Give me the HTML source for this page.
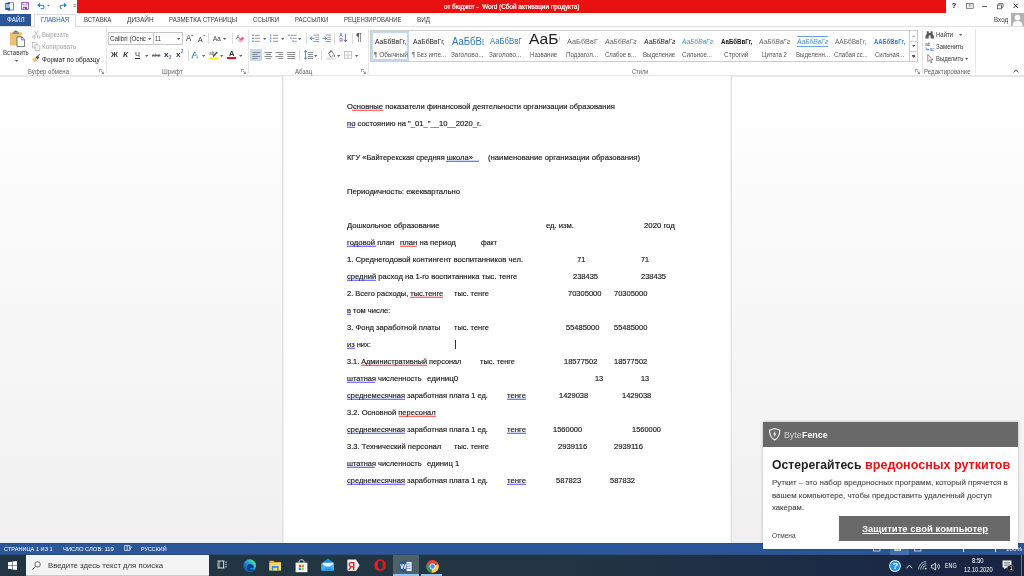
<!DOCTYPE html>
<html lang="ru"><head><meta charset="utf-8"><title>от бюджет - Word</title>
<style>
html,body{margin:0;padding:0;}
body{width:1024px;height:576px;overflow:hidden;position:relative;background:#fbfbfb;font-family:"Liberation Sans",sans-serif;}
#root{position:absolute;left:0;top:0;width:1024px;height:576px;overflow:hidden;will-change:transform;}
#root div,#root span,#root svg{position:absolute;}
#root span{white-space:pre;transform-origin:0 50%;line-height:12px;height:12px;}
</style></head><body><div id="root">
<div style="left:0px;top:0px;width:1024px;height:13.2px;background:#ffffff;"></div>
<div style="left:77px;top:0px;width:869px;height:13px;background:#e81010;"></div>
<div style="left:0px;top:13px;width:1024px;height:63px;background:#ffffff;"></div>
<div style="left:0px;top:26.3px;width:1024px;height:0.9px;background:#e0e0e0;"></div>
<div style="left:0px;top:75.3px;width:1024px;height:1.4px;background:#e8e8e8;"></div>
<div style="left:0px;top:13.6px;width:31.2px;height:12.9px;background:#2b579a;"></div>
<div style="left:33.8px;top:13.6px;width:42.3px;height:13.6px;background:#ffffff;border:0.9px solid #dedede;border-bottom:none;box-sizing:border-box;"></div>
<div style="left:0px;top:76.5px;width:1024px;height:466.5px;background:linear-gradient(#ffffff 0%,#f0f0f0 100%);"></div>
<div style="left:282px;top:76.2px;width:450px;height:467px;background:#ffffff;border-left:1px solid #e2e2e2;border-right:1px solid #e2e2e2;box-sizing:border-box;"></div>
<div style="left:283px;top:76.2px;width:1px;height:467px;background:#f1f1f1;"></div>
<div style="left:730px;top:76.2px;width:1px;height:467px;background:#f1f1f1;"></div>
<div style="left:0px;top:543px;width:1024px;height:12px;background:#2b579a;"></div>
<div style="left:0px;top:543px;width:1024px;height:1px;background:#24509a;"></div>
<div style="left:0px;top:554px;width:1024px;height:1px;background:#284c7f;"></div>
<div style="left:0px;top:555px;width:1024px;height:21px;background:linear-gradient(90deg,#213642 0%,#213642 52%,#1f3044 68%,#1b2945 86%,#192342 100%);"></div>
<div style="left:25.6px;top:555px;width:183.2px;height:21px;background:#f3f3f3;"></div>
<span style="left:443.50px;top:0.60px;font-size:6.3px;color:#ffffff;transform:scaleX(1.0147);-webkit-text-stroke:0.2px #fff;">от бюджет -  Word (Сбой активации продукта)</span>
<span style="left:7.00px;top:14.40px;font-size:7px;color:#ffffff;transform:scaleX(0.9040);">ФАЙЛ</span>
<span style="left:40.80px;top:14.40px;font-size:7px;color:#2b579a;transform:scaleX(0.8782);">ГЛАВНАЯ</span>
<span style="left:84.20px;top:14.40px;font-size:7px;color:#383838;transform:scaleX(0.8697);">ВСТАВКА</span>
<span style="left:126.90px;top:14.40px;font-size:7px;color:#383838;transform:scaleX(0.9247);">ДИЗАЙН</span>
<span style="left:169.10px;top:14.40px;font-size:7px;color:#383838;transform:scaleX(0.8752);">РАЗМЕТКА СТРАНИЦЫ</span>
<span style="left:252.80px;top:14.40px;font-size:7px;color:#383838;transform:scaleX(0.8662);">ССЫЛКИ</span>
<span style="left:294.80px;top:14.40px;font-size:7px;color:#383838;transform:scaleX(0.8571);">РАССЫЛКИ</span>
<span style="left:343.80px;top:14.40px;font-size:7px;color:#383838;transform:scaleX(0.8540);">РЕЦЕНЗИРОВАНИЕ</span>
<span style="left:417.10px;top:14.40px;font-size:7px;color:#383838;transform:scaleX(0.8925);">ВИД</span>
<span style="left:993.70px;top:13.90px;font-size:7px;color:#383838;transform:scaleX(0.8899);">Вход</span>
<span style="left:347.00px;top:100.90px;font-size:7.2px;color:#1a1a1a;transform:scaleX(1.0569);-webkit-text-stroke:0.16px #1a1a1a;">Основные показатели финансовой деятельности организации образования</span>
<svg style="left:351.5px;top:109.25px;overflow:visible" width="31.0" height="2.5"><polyline points="0.0,1.0 1.0,1.5 2.0,1.0 3.0,1.5 4.0,1.0 5.0,1.5 6.0,1.0 7.0,1.5 8.0,1.0 9.0,1.5 10.0,1.0 11.0,1.5 12.0,1.0 13.0,1.5 14.0,1.0 15.0,1.5 16.0,1.0 17.0,1.5 18.0,1.0 19.0,1.5 20.0,1.0 21.0,1.5 22.0,1.0 23.0,1.5 24.0,1.0 25.0,1.5 26.0,1.0 27.0,1.5 28.0,1.0 29.0,1.5 30.0,1.0 31.0,1.5" fill="none" stroke="#ff1a1a" stroke-width="0.85"/></svg>
<span style="left:347.00px;top:117.90px;font-size:7.2px;color:#1a1a1a;transform:scaleX(1.0602);-webkit-text-stroke:0.16px #1a1a1a;">по состоянию на &quot;_01_&quot;__10__2020_г.</span>
<svg style="left:347px;top:126.25px;overflow:visible" width="8.0" height="2.5"><polyline points="0.0,1.0 1.0,1.5 2.0,1.0 3.0,1.5 4.0,1.0 5.0,1.5 6.0,1.0 7.0,1.5 8.0,1.0" fill="none" stroke="#2a2aff" stroke-width="0.85"/></svg>
<span style="left:347.00px;top:151.90px;font-size:7.2px;color:#1a1a1a;transform:scaleX(1.0398);-webkit-text-stroke:0.16px #1a1a1a;">КГУ «Байтерекская средняя школа»</span>
<svg style="left:446px;top:160.25px;overflow:visible" width="33.0" height="2.5"><polyline points="0.0,1.0 1.0,1.5 2.0,1.0 3.0,1.5 4.0,1.0 5.0,1.5 6.0,1.0 7.0,1.5 8.0,1.0 9.0,1.5 10.0,1.0 11.0,1.5 12.0,1.0 13.0,1.5 14.0,1.0 15.0,1.5 16.0,1.0 17.0,1.5 18.0,1.0 19.0,1.5 20.0,1.0 21.0,1.5 22.0,1.0 23.0,1.5 24.0,1.0 25.0,1.5 26.0,1.0 27.0,1.5 28.0,1.0 29.0,1.5 30.0,1.0 31.0,1.5 32.0,1.0 33.0,1.5" fill="none" stroke="#2a2aff" stroke-width="0.85"/></svg>
<span style="left:487.90px;top:151.90px;font-size:7.2px;color:#1a1a1a;transform:scaleX(1.0702);-webkit-text-stroke:0.16px #1a1a1a;">(наименование организации образования)</span>
<span style="left:347.00px;top:185.90px;font-size:7.2px;color:#1a1a1a;transform:scaleX(1.0648);-webkit-text-stroke:0.16px #1a1a1a;">Периодичность: ежеквартально</span>
<span style="left:347.00px;top:219.90px;font-size:7.2px;color:#1a1a1a;transform:scaleX(1.0688);-webkit-text-stroke:0.16px #1a1a1a;">Дошкольное образование</span>
<span style="left:546.00px;top:219.90px;font-size:7.2px;color:#1a1a1a;transform:scaleX(1.0654);-webkit-text-stroke:0.16px #1a1a1a;">ед. изм.</span>
<span style="left:643.90px;top:219.90px;font-size:7.2px;color:#1a1a1a;transform:scaleX(1.0813);-webkit-text-stroke:0.16px #1a1a1a;">2020 год</span>
<span style="left:347.00px;top:236.90px;font-size:7.2px;color:#1a1a1a;transform:scaleX(1.0678);-webkit-text-stroke:0.16px #1a1a1a;">годовой план</span>
<svg style="left:347px;top:245.25px;overflow:visible" width="29.0" height="2.5"><polyline points="0.0,1.0 1.0,1.5 2.0,1.0 3.0,1.5 4.0,1.0 5.0,1.5 6.0,1.0 7.0,1.5 8.0,1.0 9.0,1.5 10.0,1.0 11.0,1.5 12.0,1.0 13.0,1.5 14.0,1.0 15.0,1.5 16.0,1.0 17.0,1.5 18.0,1.0 19.0,1.5 20.0,1.0 21.0,1.5 22.0,1.0 23.0,1.5 24.0,1.0 25.0,1.5 26.0,1.0 27.0,1.5 28.0,1.0 29.0,1.5" fill="none" stroke="#2a2aff" stroke-width="0.85"/></svg>
<span style="left:400.00px;top:236.90px;font-size:7.2px;color:#1a1a1a;transform:scaleX(1.0740);-webkit-text-stroke:0.16px #1a1a1a;">план на период</span>
<svg style="left:400px;top:245.25px;overflow:visible" width="17.0" height="2.5"><polyline points="0.0,1.0 1.0,1.5 2.0,1.0 3.0,1.5 4.0,1.0 5.0,1.5 6.0,1.0 7.0,1.5 8.0,1.0 9.0,1.5 10.0,1.0 11.0,1.5 12.0,1.0 13.0,1.5 14.0,1.0 15.0,1.5 16.0,1.0 17.0,1.5" fill="none" stroke="#ff1a1a" stroke-width="0.85"/></svg>
<span style="left:480.60px;top:236.90px;font-size:7.2px;color:#1a1a1a;transform:scaleX(0.9612);-webkit-text-stroke:0.16px #1a1a1a;">факт</span>
<span style="left:347.00px;top:253.90px;font-size:7.2px;color:#1a1a1a;transform:scaleX(1.0695);-webkit-text-stroke:0.16px #1a1a1a;">1. Среднегодовой контингент воспитанников чел.</span>
<span style="left:577.30px;top:253.90px;font-size:7.2px;color:#1a1a1a;transform:scaleX(1.0000);-webkit-text-stroke:0.16px #1a1a1a;">71</span>
<span style="left:641.00px;top:253.90px;font-size:7.2px;color:#1a1a1a;transform:scaleX(1.0000);-webkit-text-stroke:0.16px #1a1a1a;">71</span>
<span style="left:347.00px;top:270.90px;font-size:7.2px;color:#1a1a1a;transform:scaleX(1.0581);-webkit-text-stroke:0.16px #1a1a1a;">средний расход на 1-го воспитанника тыс. тенге</span>
<svg style="left:347px;top:279.25px;overflow:visible" width="29.5" height="2.5"><polyline points="0.0,1.0 1.0,1.5 2.0,1.0 3.0,1.5 4.0,1.0 5.0,1.5 6.0,1.0 7.0,1.5 8.0,1.0 9.0,1.5 10.0,1.0 11.0,1.5 12.0,1.0 13.0,1.5 14.0,1.0 15.0,1.5 16.0,1.0 17.0,1.5 18.0,1.0 19.0,1.5 20.0,1.0 21.0,1.5 22.0,1.0 23.0,1.5 24.0,1.0 25.0,1.5 26.0,1.0 27.0,1.5 28.0,1.0 29.0,1.5" fill="none" stroke="#2a2aff" stroke-width="0.85"/></svg>
<span style="left:573.40px;top:270.90px;font-size:7.2px;color:#1a1a1a;transform:scaleX(1.0423);-webkit-text-stroke:0.16px #1a1a1a;">238435</span>
<span style="left:641.00px;top:270.90px;font-size:7.2px;color:#1a1a1a;transform:scaleX(1.0423);-webkit-text-stroke:0.16px #1a1a1a;">238435</span>
<span style="left:347.00px;top:287.90px;font-size:7.2px;color:#1a1a1a;transform:scaleX(1.0352);-webkit-text-stroke:0.16px #1a1a1a;">2. Всего расходы, тыс.тенге</span>
<svg style="left:410px;top:296.25px;overflow:visible" width="33.1" height="2.5"><polyline points="0.0,1.0 1.0,1.5 2.0,1.0 3.0,1.5 4.0,1.0 5.0,1.5 6.0,1.0 7.0,1.5 8.0,1.0 9.0,1.5 10.0,1.0 11.0,1.5 12.0,1.0 13.0,1.5 14.0,1.0 15.0,1.5 16.0,1.0 17.0,1.5 18.0,1.0 19.0,1.5 20.0,1.0 21.0,1.5 22.0,1.0 23.0,1.5 24.0,1.0 25.0,1.5 26.0,1.0 27.0,1.5 28.0,1.0 29.0,1.5 30.0,1.0 31.0,1.5 32.0,1.0 33.0,1.5" fill="none" stroke="#ff1a1a" stroke-width="0.85"/></svg>
<span style="left:453.90px;top:287.90px;font-size:7.2px;color:#1a1a1a;transform:scaleX(1.0360);-webkit-text-stroke:0.16px #1a1a1a;">тыс. тенге</span>
<span style="left:567.50px;top:287.90px;font-size:7.2px;color:#1a1a1a;transform:scaleX(1.0474);-webkit-text-stroke:0.16px #1a1a1a;">70305000</span>
<span style="left:614.40px;top:287.90px;font-size:7.2px;color:#1a1a1a;transform:scaleX(1.0443);-webkit-text-stroke:0.16px #1a1a1a;">70305000</span>
<span style="left:347.00px;top:304.90px;font-size:7.2px;color:#1a1a1a;transform:scaleX(1.0454);-webkit-text-stroke:0.16px #1a1a1a;">в том числе:</span>
<svg style="left:347px;top:313.25px;overflow:visible" width="4.0" height="2.5"><polyline points="0.0,1.0 1.0,1.5 2.0,1.0 3.0,1.5 4.0,1.0" fill="none" stroke="#2a2aff" stroke-width="0.85"/></svg>
<span style="left:347.00px;top:321.90px;font-size:7.2px;color:#1a1a1a;transform:scaleX(1.0529);-webkit-text-stroke:0.16px #1a1a1a;">3. Фонд заработной платы</span>
<span style="left:453.90px;top:321.90px;font-size:7.2px;color:#1a1a1a;transform:scaleX(1.0360);-webkit-text-stroke:0.16px #1a1a1a;">тыс. тенге</span>
<span style="left:565.50px;top:321.90px;font-size:7.2px;color:#1a1a1a;transform:scaleX(1.0411);-webkit-text-stroke:0.16px #1a1a1a;">55485000</span>
<span style="left:614.40px;top:321.90px;font-size:7.2px;color:#1a1a1a;transform:scaleX(1.0443);-webkit-text-stroke:0.16px #1a1a1a;">55485000</span>
<span style="left:347.00px;top:338.90px;font-size:7.2px;color:#1a1a1a;transform:scaleX(1.0441);-webkit-text-stroke:0.16px #1a1a1a;">из них:</span>
<svg style="left:347px;top:347.25px;overflow:visible" width="8.0" height="2.5"><polyline points="0.0,1.0 1.0,1.5 2.0,1.0 3.0,1.5 4.0,1.0 5.0,1.5 6.0,1.0 7.0,1.5 8.0,1.0" fill="none" stroke="#2a2aff" stroke-width="0.85"/></svg>
<div style="left:455px;top:339.8px;width:0.8px;height:9px;background:#333;"></div>
<span style="left:347.00px;top:355.90px;font-size:7.2px;color:#1a1a1a;transform:scaleX(1.0147);-webkit-text-stroke:0.16px #1a1a1a;">3.1. Административный персонал</span>
<svg style="left:361px;top:364.25px;overflow:visible" width="66.0" height="2.5"><polyline points="0.0,1.0 1.0,1.5 2.0,1.0 3.0,1.5 4.0,1.0 5.0,1.5 6.0,1.0 7.0,1.5 8.0,1.0 9.0,1.5 10.0,1.0 11.0,1.5 12.0,1.0 13.0,1.5 14.0,1.0 15.0,1.5 16.0,1.0 17.0,1.5 18.0,1.0 19.0,1.5 20.0,1.0 21.0,1.5 22.0,1.0 23.0,1.5 24.0,1.0 25.0,1.5 26.0,1.0 27.0,1.5 28.0,1.0 29.0,1.5 30.0,1.0 31.0,1.5 32.0,1.0 33.0,1.5 34.0,1.0 35.0,1.5 36.0,1.0 37.0,1.5 38.0,1.0 39.0,1.5 40.0,1.0 41.0,1.5 42.0,1.0 43.0,1.5 44.0,1.0 45.0,1.5 46.0,1.0 47.0,1.5 48.0,1.0 49.0,1.5 50.0,1.0 51.0,1.5 52.0,1.0 53.0,1.5 54.0,1.0 55.0,1.5 56.0,1.0 57.0,1.5 58.0,1.0 59.0,1.5 60.0,1.0 61.0,1.5 62.0,1.0 63.0,1.5 64.0,1.0 65.0,1.5 66.0,1.0" fill="none" stroke="#ff1a1a" stroke-width="0.85"/></svg>
<span style="left:480.20px;top:355.90px;font-size:7.2px;color:#1a1a1a;transform:scaleX(1.0390);-webkit-text-stroke:0.16px #1a1a1a;">тыс. тенге</span>
<span style="left:564.20px;top:355.90px;font-size:7.2px;color:#1a1a1a;transform:scaleX(1.0443);-webkit-text-stroke:0.16px #1a1a1a;">18577502</span>
<span style="left:614.40px;top:355.90px;font-size:7.2px;color:#1a1a1a;transform:scaleX(1.0380);-webkit-text-stroke:0.16px #1a1a1a;">18577502</span>
<span style="left:347.00px;top:372.90px;font-size:7.2px;color:#1a1a1a;transform:scaleX(1.0350);-webkit-text-stroke:0.16px #1a1a1a;">штатная численность</span>
<svg style="left:347px;top:381.25px;overflow:visible" width="28.5" height="2.5"><polyline points="0.0,1.0 1.0,1.5 2.0,1.0 3.0,1.5 4.0,1.0 5.0,1.5 6.0,1.0 7.0,1.5 8.0,1.0 9.0,1.5 10.0,1.0 11.0,1.5 12.0,1.0 13.0,1.5 14.0,1.0 15.0,1.5 16.0,1.0 17.0,1.5 18.0,1.0 19.0,1.5 20.0,1.0 21.0,1.5 22.0,1.0 23.0,1.5 24.0,1.0 25.0,1.5 26.0,1.0 27.0,1.5 28.0,1.0" fill="none" stroke="#2a2aff" stroke-width="0.85"/></svg>
<span style="left:426.90px;top:372.90px;font-size:7.2px;color:#1a1a1a;transform:scaleX(1.1117);-webkit-text-stroke:0.16px #1a1a1a;">единиц0</span>
<span style="left:595.20px;top:372.90px;font-size:7.2px;color:#1a1a1a;transform:scaleX(1.0250);-webkit-text-stroke:0.16px #1a1a1a;">13</span>
<span style="left:641.00px;top:372.90px;font-size:7.2px;color:#1a1a1a;transform:scaleX(1.0125);-webkit-text-stroke:0.16px #1a1a1a;">13</span>
<span style="left:347.00px;top:389.90px;font-size:7.2px;color:#1a1a1a;transform:scaleX(1.0424);-webkit-text-stroke:0.16px #1a1a1a;">среднемесячная заработная плата 1 ед.</span>
<svg style="left:347px;top:398.25px;overflow:visible" width="58.0" height="2.5"><polyline points="0.0,1.0 1.0,1.5 2.0,1.0 3.0,1.5 4.0,1.0 5.0,1.5 6.0,1.0 7.0,1.5 8.0,1.0 9.0,1.5 10.0,1.0 11.0,1.5 12.0,1.0 13.0,1.5 14.0,1.0 15.0,1.5 16.0,1.0 17.0,1.5 18.0,1.0 19.0,1.5 20.0,1.0 21.0,1.5 22.0,1.0 23.0,1.5 24.0,1.0 25.0,1.5 26.0,1.0 27.0,1.5 28.0,1.0 29.0,1.5 30.0,1.0 31.0,1.5 32.0,1.0 33.0,1.5 34.0,1.0 35.0,1.5 36.0,1.0 37.0,1.5 38.0,1.0 39.0,1.5 40.0,1.0 41.0,1.5 42.0,1.0 43.0,1.5 44.0,1.0 45.0,1.5 46.0,1.0 47.0,1.5 48.0,1.0 49.0,1.5 50.0,1.0 51.0,1.5 52.0,1.0 53.0,1.5 54.0,1.0 55.0,1.5 56.0,1.0 57.0,1.5 58.0,1.0" fill="none" stroke="#2a2aff" stroke-width="0.85"/></svg>
<span style="left:507.00px;top:389.90px;font-size:7.2px;color:#1a1a1a;transform:scaleX(1.0771);-webkit-text-stroke:0.16px #1a1a1a;">тенге</span>
<svg style="left:507px;top:398.25px;overflow:visible" width="19.0" height="2.5"><polyline points="0.0,1.0 1.0,1.5 2.0,1.0 3.0,1.5 4.0,1.0 5.0,1.5 6.0,1.0 7.0,1.5 8.0,1.0 9.0,1.5 10.0,1.0 11.0,1.5 12.0,1.0 13.0,1.5 14.0,1.0 15.0,1.5 16.0,1.0 17.0,1.5 18.0,1.0 19.0,1.5" fill="none" stroke="#2a2aff" stroke-width="0.85"/></svg>
<span style="left:347.00px;top:423.90px;font-size:7.2px;color:#1a1a1a;transform:scaleX(1.0424);-webkit-text-stroke:0.16px #1a1a1a;">среднемесячная заработная плата 1 ед.</span>
<svg style="left:347px;top:432.25px;overflow:visible" width="58.0" height="2.5"><polyline points="0.0,1.0 1.0,1.5 2.0,1.0 3.0,1.5 4.0,1.0 5.0,1.5 6.0,1.0 7.0,1.5 8.0,1.0 9.0,1.5 10.0,1.0 11.0,1.5 12.0,1.0 13.0,1.5 14.0,1.0 15.0,1.5 16.0,1.0 17.0,1.5 18.0,1.0 19.0,1.5 20.0,1.0 21.0,1.5 22.0,1.0 23.0,1.5 24.0,1.0 25.0,1.5 26.0,1.0 27.0,1.5 28.0,1.0 29.0,1.5 30.0,1.0 31.0,1.5 32.0,1.0 33.0,1.5 34.0,1.0 35.0,1.5 36.0,1.0 37.0,1.5 38.0,1.0 39.0,1.5 40.0,1.0 41.0,1.5 42.0,1.0 43.0,1.5 44.0,1.0 45.0,1.5 46.0,1.0 47.0,1.5 48.0,1.0 49.0,1.5 50.0,1.0 51.0,1.5 52.0,1.0 53.0,1.5 54.0,1.0 55.0,1.5 56.0,1.0 57.0,1.5 58.0,1.0" fill="none" stroke="#2a2aff" stroke-width="0.85"/></svg>
<span style="left:507.00px;top:423.90px;font-size:7.2px;color:#1a1a1a;transform:scaleX(1.0771);-webkit-text-stroke:0.16px #1a1a1a;">тенге</span>
<svg style="left:507px;top:432.25px;overflow:visible" width="19.0" height="2.5"><polyline points="0.0,1.0 1.0,1.5 2.0,1.0 3.0,1.5 4.0,1.0 5.0,1.5 6.0,1.0 7.0,1.5 8.0,1.0 9.0,1.5 10.0,1.0 11.0,1.5 12.0,1.0 13.0,1.5 14.0,1.0 15.0,1.5 16.0,1.0 17.0,1.5 18.0,1.0 19.0,1.5" fill="none" stroke="#2a2aff" stroke-width="0.85"/></svg>
<span style="left:347.00px;top:474.90px;font-size:7.2px;color:#1a1a1a;transform:scaleX(1.0424);-webkit-text-stroke:0.16px #1a1a1a;">среднемесячная заработная плата 1 ед.</span>
<svg style="left:347px;top:483.25px;overflow:visible" width="58.0" height="2.5"><polyline points="0.0,1.0 1.0,1.5 2.0,1.0 3.0,1.5 4.0,1.0 5.0,1.5 6.0,1.0 7.0,1.5 8.0,1.0 9.0,1.5 10.0,1.0 11.0,1.5 12.0,1.0 13.0,1.5 14.0,1.0 15.0,1.5 16.0,1.0 17.0,1.5 18.0,1.0 19.0,1.5 20.0,1.0 21.0,1.5 22.0,1.0 23.0,1.5 24.0,1.0 25.0,1.5 26.0,1.0 27.0,1.5 28.0,1.0 29.0,1.5 30.0,1.0 31.0,1.5 32.0,1.0 33.0,1.5 34.0,1.0 35.0,1.5 36.0,1.0 37.0,1.5 38.0,1.0 39.0,1.5 40.0,1.0 41.0,1.5 42.0,1.0 43.0,1.5 44.0,1.0 45.0,1.5 46.0,1.0 47.0,1.5 48.0,1.0 49.0,1.5 50.0,1.0 51.0,1.5 52.0,1.0 53.0,1.5 54.0,1.0 55.0,1.5 56.0,1.0 57.0,1.5 58.0,1.0" fill="none" stroke="#2a2aff" stroke-width="0.85"/></svg>
<span style="left:507.00px;top:474.90px;font-size:7.2px;color:#1a1a1a;transform:scaleX(1.0771);-webkit-text-stroke:0.16px #1a1a1a;">тенге</span>
<svg style="left:507px;top:483.25px;overflow:visible" width="19.0" height="2.5"><polyline points="0.0,1.0 1.0,1.5 2.0,1.0 3.0,1.5 4.0,1.0 5.0,1.5 6.0,1.0 7.0,1.5 8.0,1.0 9.0,1.5 10.0,1.0 11.0,1.5 12.0,1.0 13.0,1.5 14.0,1.0 15.0,1.5 16.0,1.0 17.0,1.5 18.0,1.0 19.0,1.5" fill="none" stroke="#2a2aff" stroke-width="0.85"/></svg>
<span style="left:558.70px;top:389.90px;font-size:7.2px;color:#1a1a1a;transform:scaleX(1.0399);-webkit-text-stroke:0.16px #1a1a1a;">1429038</span>
<span style="left:621.80px;top:389.90px;font-size:7.2px;color:#1a1a1a;transform:scaleX(1.0470);-webkit-text-stroke:0.16px #1a1a1a;">1429038</span>
<span style="left:347.00px;top:406.90px;font-size:7.2px;color:#1a1a1a;transform:scaleX(1.0478);-webkit-text-stroke:0.16px #1a1a1a;">3.2. Основной пересонал</span>
<svg style="left:398.5px;top:415.25px;overflow:visible" width="37.2" height="2.5"><polyline points="0.0,1.0 1.0,1.5 2.0,1.0 3.0,1.5 4.0,1.0 5.0,1.5 6.0,1.0 7.0,1.5 8.0,1.0 9.0,1.5 10.0,1.0 11.0,1.5 12.0,1.0 13.0,1.5 14.0,1.0 15.0,1.5 16.0,1.0 17.0,1.5 18.0,1.0 19.0,1.5 20.0,1.0 21.0,1.5 22.0,1.0 23.0,1.5 24.0,1.0 25.0,1.5 26.0,1.0 27.0,1.5 28.0,1.0 29.0,1.5 30.0,1.0 31.0,1.5 32.0,1.0 33.0,1.5 34.0,1.0 35.0,1.5 36.0,1.0 37.0,1.5" fill="none" stroke="#ff1a1a" stroke-width="0.85"/></svg>
<span style="left:553.00px;top:423.90px;font-size:7.2px;color:#1a1a1a;transform:scaleX(1.0399);-webkit-text-stroke:0.16px #1a1a1a;">1560000</span>
<span style="left:631.60px;top:423.90px;font-size:7.2px;color:#1a1a1a;transform:scaleX(1.0327);-webkit-text-stroke:0.16px #1a1a1a;">1560000</span>
<span style="left:347.00px;top:440.90px;font-size:7.2px;color:#1a1a1a;transform:scaleX(1.0510);-webkit-text-stroke:0.16px #1a1a1a;">3.3. Технический персонал</span>
<span style="left:453.90px;top:440.90px;font-size:7.2px;color:#1a1a1a;transform:scaleX(1.0360);-webkit-text-stroke:0.16px #1a1a1a;">тыс. тенге</span>
<span style="left:557.90px;top:440.90px;font-size:7.2px;color:#1a1a1a;transform:scaleX(1.0673);-webkit-text-stroke:0.16px #1a1a1a;">2939116</span>
<span style="left:614.40px;top:440.90px;font-size:7.2px;color:#1a1a1a;transform:scaleX(1.0600);-webkit-text-stroke:0.16px #1a1a1a;">2939116</span>
<span style="left:347.00px;top:457.90px;font-size:7.2px;color:#1a1a1a;transform:scaleX(1.0350);-webkit-text-stroke:0.16px #1a1a1a;">штатная численность</span>
<svg style="left:347px;top:466.25px;overflow:visible" width="28.5" height="2.5"><polyline points="0.0,1.0 1.0,1.5 2.0,1.0 3.0,1.5 4.0,1.0 5.0,1.5 6.0,1.0 7.0,1.5 8.0,1.0 9.0,1.5 10.0,1.0 11.0,1.5 12.0,1.0 13.0,1.5 14.0,1.0 15.0,1.5 16.0,1.0 17.0,1.5 18.0,1.0 19.0,1.5 20.0,1.0 21.0,1.5 22.0,1.0 23.0,1.5 24.0,1.0 25.0,1.5 26.0,1.0 27.0,1.5 28.0,1.0" fill="none" stroke="#2a2aff" stroke-width="0.85"/></svg>
<span style="left:426.90px;top:457.90px;font-size:7.2px;color:#1a1a1a;transform:scaleX(1.0678);-webkit-text-stroke:0.16px #1a1a1a;">единиц 1</span>
<span style="left:556.00px;top:474.90px;font-size:7.2px;color:#1a1a1a;transform:scaleX(1.0507);-webkit-text-stroke:0.16px #1a1a1a;">587823</span>
<span style="left:609.70px;top:474.90px;font-size:7.2px;color:#1a1a1a;transform:scaleX(1.0423);-webkit-text-stroke:0.16px #1a1a1a;">587832</span>
<div style="left:105.6px;top:29px;width:0.9px;height:44px;background:#e6e6e6;"></div>
<div style="left:247.5px;top:29px;width:0.9px;height:44px;background:#e6e6e6;"></div>
<div style="left:367.5px;top:29px;width:0.9px;height:44px;background:#e6e6e6;"></div>
<div style="left:922px;top:29px;width:0.9px;height:44px;background:#e6e6e6;"></div>
<div style="left:974.7px;top:29px;width:0.9px;height:44px;background:#e6e6e6;"></div>
<div style="left:208.1px;top:33px;width:0.8px;height:11px;background:#dcdcdc;"></div>
<div style="left:187.5px;top:49.5px;width:0.8px;height:11.5px;background:#dcdcdc;"></div>
<div style="left:306.3px;top:33px;width:0.8px;height:11px;background:#dcdcdc;"></div>
<div style="left:334.4px;top:33px;width:0.8px;height:11px;background:#dcdcdc;"></div>
<div style="left:351.6px;top:33px;width:0.8px;height:11px;background:#dcdcdc;"></div>
<div style="left:299.4px;top:49.5px;width:0.8px;height:11.5px;background:#dcdcdc;"></div>
<div style="left:321.3px;top:49.5px;width:0.8px;height:11.5px;background:#dcdcdc;"></div>
<span style="left:27.80px;top:65.60px;font-size:6.6px;color:#666666;transform:scaleX(0.9149);">Буфер обмена</span>
<span style="left:162.00px;top:65.60px;font-size:6.6px;color:#666666;transform:scaleX(0.9584);">Шрифт</span>
<span style="left:295.00px;top:65.60px;font-size:6.6px;color:#666666;transform:scaleX(0.9351);">Абзац</span>
<span style="left:631.90px;top:65.60px;font-size:6.6px;color:#666666;transform:scaleX(0.8632);">Стили</span>
<span style="left:924.40px;top:65.60px;font-size:6.6px;color:#666666;transform:scaleX(0.9296);">Редактирование</span>
<svg style="left:99.2px;top:69.2px" width="5" height="5" viewBox="0 0 5 5"><path d="M0.4 3V0.4H3M2 2L4.5 4.5M4.5 2.6V4.5H2.6" fill="none" stroke="#777" stroke-width="0.7"/></svg>
<svg style="left:240.8px;top:69.2px" width="5" height="5" viewBox="0 0 5 5"><path d="M0.4 3V0.4H3M2 2L4.5 4.5M4.5 2.6V4.5H2.6" fill="none" stroke="#777" stroke-width="0.7"/></svg>
<svg style="left:360.8px;top:69.2px" width="5" height="5" viewBox="0 0 5 5"><path d="M0.4 3V0.4H3M2 2L4.5 4.5M4.5 2.6V4.5H2.6" fill="none" stroke="#777" stroke-width="0.7"/></svg>
<svg style="left:915.4px;top:69.2px" width="5" height="5" viewBox="0 0 5 5"><path d="M0.4 3V0.4H3M2 2L4.5 4.5M4.5 2.6V4.5H2.6" fill="none" stroke="#777" stroke-width="0.7"/></svg>
<span style="left:3.10px;top:46.80px;font-size:7px;color:#383838;transform:scaleX(0.8661);">Вставить</span>
<span style="left:42.30px;top:28.60px;font-size:7px;color:#a6a6a6;transform:scaleX(0.8574);">Вырезать</span>
<span style="left:42.30px;top:40.60px;font-size:7px;color:#a6a6a6;transform:scaleX(0.9071);">Копировать</span>
<span style="left:42.30px;top:53.60px;font-size:7px;color:#222;transform:scaleX(0.9191);">Формат по образцу</span>
<svg style="left:14.60px;top:59.85px" width="3.4" height="1.9" viewBox="0 0 3.4 1.9"><path d="M0 0H3.4L1.7 1.9Z" fill="#666"/></svg>
<svg style="left:9px;top:30px" width="17" height="18" viewBox="0 0 17 18"><rect x="0.8" y="2.2" width="12" height="13.4" rx="0.6" fill="#efc374"/><path d="M4.2 2.6V1.6H5.6C5.6 0.2 8 0.2 8 1.6H9.4V2.6Z" fill="#6b6b6b"/><rect x="3.6" y="2.6" width="6.4" height="1.1" fill="#7a7a7a"/><path d="M8 6.9H12.6L15.6 9.9V16.6H8Z" fill="#fff" stroke="#555" stroke-width="0.8"/><path d="M12.6 6.9V9.9H15.6" fill="none" stroke="#555" stroke-width="0.7"/></svg>
<svg style="left:32px;top:30px" width="9" height="9" viewBox="0 0 9 9"><path d="M2.2 0.5L6 6M6.4 0.5L2.6 6" stroke="#b5b5b5" stroke-width="0.8" fill="none"/><circle cx="2" cy="7" r="1.3" fill="none" stroke="#b5b5b5" stroke-width="0.8"/><circle cx="6.6" cy="7" r="1.3" fill="none" stroke="#b5b5b5" stroke-width="0.8"/></svg>
<svg style="left:32px;top:42px" width="9" height="9" viewBox="0 0 9 9"><path d="M0.5 0.5H3.8L5 1.8V6H0.5Z" fill="#f4f4f4" stroke="#b9b9b9" stroke-width="0.8"/><path d="M3.2 2.8H6.5L7.8 4.1V8.5H3.2Z" fill="#f4f4f4" stroke="#b9b9b9" stroke-width="0.8"/></svg>
<svg style="left:32px;top:54px" width="9" height="9" viewBox="0 0 9 9"><path d="M0.2 5L3.6 3.4L5.4 6.2L2.4 8.4Z" fill="#f0c070"/><path d="M3.6 3.2L5.6 1.4L7.4 3.6L5.4 5.6Z" fill="#555"/><path d="M6.2 1.6L7.8 0.2" stroke="#555" stroke-width="1"/></svg>
<div style="left:108px;top:32px;width:75px;height:13px;background:#fff;border:1px solid #c6c6c6;box-sizing:border-box;"></div>
<div style="left:153px;top:32px;width:1px;height:13px;background:#c6c6c6;"></div>
<span style="left:110.00px;top:32.60px;font-size:7px;color:#333;transform:scaleX(0.8903);">Calibri (Оснс</span>
<span style="left:155.40px;top:32.60px;font-size:7px;color:#333;transform:scaleX(0.8103);">11</span>
<svg style="left:148.10px;top:37.85px" width="3.4" height="1.9" viewBox="0 0 3.4 1.9"><path d="M0 0H3.4L1.7 1.9Z" fill="#666"/></svg>
<svg style="left:177.10px;top:37.85px" width="3.4" height="1.9" viewBox="0 0 3.4 1.9"><path d="M0 0H3.4L1.7 1.9Z" fill="#666"/></svg>
<span style="left:186.30px;top:33.00px;font-size:8.2px;color:#383838;transform:scaleX(0.9691);">A</span>
<svg style="left:191.30px;top:34.50px" width="2.2" height="1.4" viewBox="0 0 2.2 1.4"><path d="M0 0H2.2L1.1 1.4Z" fill="#3b78c9"/></svg>
<span style="left:198.40px;top:33.60px;font-size:7px;color:#383838;transform:scaleX(0.9846);">A</span>
<svg style="left:202.50px;top:34.70px" width="2.2" height="1.4" viewBox="0 0 2.2 1.4"><path d="M0 0H2.2L1.1 1.4Z" fill="#3b78c9"/></svg>
<span style="left:212.90px;top:32.60px;font-size:7px;color:#383838;transform:scaleX(0.8993);">Aa</span>
<svg style="left:222.90px;top:37.85px" width="3.4" height="1.9" viewBox="0 0 3.4 1.9"><path d="M0 0H3.4L1.7 1.9Z" fill="#666"/></svg>
<svg style="left:235.6px;top:34px" width="9" height="9" viewBox="0 0 9 9"><text x="0.2" y="5.2" font-size="5.5" font-family="Liberation Sans, sans-serif" fill="#555">A</text><path d="M2.2 6.6L6.4 2.4L8.4 4.4L4.2 8.6Z" fill="#e8688a"/><path d="M2.2 6.6L3.6 5.2L5.6 7.2L4.2 8.6Z" fill="#f6b6c6"/></svg>
<span style="left:110.60px;top:49.10px;font-size:7.2px;color:#333;font-weight:bold;transform:scaleX(1.0615);">Ж</span>
<span style="left:123.10px;top:49.10px;font-size:7.2px;color:#333;font-weight:bold;font-style:italic;transform:scaleX(1.1307);">К</span>
<span style="left:135.00px;top:49.10px;font-size:7.2px;color:#333;transform:scaleX(1.0423);text-decoration:underline;">Ч</span>
<svg style="left:144.60px;top:54.65px" width="3.4" height="1.9" viewBox="0 0 3.4 1.9"><path d="M0 0H3.4L1.7 1.9Z" fill="#666"/></svg>
<span style="left:151.60px;top:49.30px;font-size:6.2px;color:#666;transform:scaleX(0.8413);text-decoration:line-through;">abc</span>
<span style="left:164.40px;top:49.10px;font-size:7.4px;color:#333;font-weight:bold;transform:scaleX(1.1152);">x</span>
<span style="left:169.20px;top:51.60px;font-size:4.6px;color:#3b78c9;font-weight:bold;transform:scaleX(0.9366);">2</span>
<span style="left:176.30px;top:49.10px;font-size:7.4px;color:#333;font-weight:bold;transform:scaleX(1.0909);">x</span>
<span style="left:181.00px;top:46.30px;font-size:4.6px;color:#3b78c9;font-weight:bold;transform:scaleX(0.9366);">2</span>
<svg style="left:191.4px;top:50px" width="9" height="10" viewBox="0 0 9 10"><text x="0.7" y="8.2" font-size="8.8" font-family="Liberation Sans, sans-serif" fill="#eaf2fc" stroke="#3b78c9" stroke-width="0.55">A</text><text x="1.9" y="7.6" font-size="6.4" font-family="Liberation Sans, sans-serif" fill="#ffffff">A</text></svg>
<svg style="left:201.70px;top:54.65px" width="3.4" height="1.9" viewBox="0 0 3.4 1.9"><path d="M0 0H3.4L1.7 1.9Z" fill="#666"/></svg>
<svg style="left:208.6px;top:50px" width="10" height="10" viewBox="0 0 10 10"><text x="0.2" y="5" font-size="4.6" font-family="Liberation Sans, sans-serif" fill="#555">ab</text><path d="M3.4 6L7.6 1.4L8.8 2.4L4.8 7Z" fill="#555"/><rect x="0.2" y="7.3" width="9.2" height="1.9" fill="#ffee00"/></svg>
<svg style="left:220.40px;top:54.65px" width="3.4" height="1.9" viewBox="0 0 3.4 1.9"><path d="M0 0H3.4L1.7 1.9Z" fill="#666"/></svg>
<span style="left:229.00px;top:48.00px;font-size:7.4px;color:#333;font-weight:bold;transform:scaleX(1.0105);">A</span>
<div style="left:227.3px;top:57.3px;width:8.8px;height:1.8px;background:#e81111;"></div>
<svg style="left:238.60px;top:54.65px" width="3.4" height="1.9" viewBox="0 0 3.4 1.9"><path d="M0 0H3.4L1.7 1.9Z" fill="#666"/></svg>
<svg style="left:251.6px;top:34px" width="9" height="9" viewBox="0 0 9 9"><rect x="0.3" y="0.6" width="1.4" height="1.4" fill="#3b78c9"/><rect x="0.3" y="3.6" width="1.4" height="1.4" fill="#3b78c9"/><rect x="0.3" y="6.6" width="1.4" height="1.4" fill="#3b78c9"/><path d="M3 1.3H7.8M3 4.3H7.8M3 7.3H7.8" stroke="#6a6a6a" stroke-width="0.7" fill="none"/></svg>
<svg style="left:262.90px;top:37.85px" width="3.4" height="1.9" viewBox="0 0 3.4 1.9"><path d="M0 0H3.4L1.7 1.9Z" fill="#666"/></svg>
<svg style="left:269.8px;top:34px" width="9" height="9" viewBox="0 0 9 9"><path d="M0.8 0.4V8.2" stroke="#3b78c9" stroke-width="0.9" stroke-dasharray="2.1 0.9"/><path d="M3 1.3H8.2M3 4.3H8.2M3 7.3H8.2" stroke="#6a6a6a" stroke-width="0.7" fill="none"/></svg>
<svg style="left:281.20px;top:37.85px" width="3.4" height="1.9" viewBox="0 0 3.4 1.9"><path d="M0 0H3.4L1.7 1.9Z" fill="#666"/></svg>
<svg style="left:287.6px;top:34px" width="10" height="9" viewBox="0 0 10 9"><rect x="0.3" y="0.6" width="1.3" height="1.3" fill="#3b78c9"/><rect x="2.3" y="3.6" width="1.3" height="1.3" fill="#3b78c9"/><rect x="4.3" y="6.6" width="1.3" height="1.3" fill="#3b78c9"/><path d="M2.6 1.3H8.8M4.6 4.3H8.8M6.6 7.3H8.8" stroke="#6a6a6a" stroke-width="0.7" fill="none"/></svg>
<svg style="left:298.30px;top:37.85px" width="3.4" height="1.9" viewBox="0 0 3.4 1.9"><path d="M0 0H3.4L1.7 1.9Z" fill="#666"/></svg>
<svg style="left:310px;top:34px" width="10" height="9" viewBox="0 0 10 9"><path d="M3.6 1H9.2M5.4 3.2H9.2M5.4 5.4H9.2M3.6 7.6H9.2" stroke="#6a6a6a" stroke-width="0.7" fill="none"/><path d="M0.3 4.3H4.6M0.3 4.3L2.2 2.6M0.3 4.3L2.2 6" stroke="#3b78c9" stroke-width="0.9" fill="none"/></svg>
<svg style="left:321.8px;top:34px" width="10" height="9" viewBox="0 0 10 9"><path d="M3.6 1H9.2M5.4 3.2H9.2M5.4 5.4H9.2M3.6 7.6H9.2" stroke="#6a6a6a" stroke-width="0.7" fill="none"/><path d="M0.3 4.3H4.6M4.6 4.3L2.7 2.6M4.6 4.3L2.7 6" stroke="#3b78c9" stroke-width="0.9" fill="none"/></svg>
<svg style="left:339px;top:33.4px" width="9" height="10" viewBox="0 0 9 10"><text x="0.2" y="4.4" font-size="4.8" font-weight="bold" font-family="Liberation Sans, sans-serif" fill="#3b78c9">А</text><text x="0.2" y="9.2" font-size="4.8" font-weight="bold" font-family="Liberation Sans, sans-serif" fill="#9a5bb5">Я</text><path d="M6.4 0.8V8.6M4.8 6.8L6.4 8.8L8 6.8" stroke="#555" stroke-width="0.8" fill="none"/></svg>
<span style="left:356.40px;top:31.40px;font-size:10.5px;color:#555;transform:scaleX(1.0637);">¶</span>
<div style="left:250px;top:49px;width:12px;height:12px;background:#c5d9f3;"></div>
<svg style="left:252px;top:51px" width="9" height="9" viewBox="0 0 9 9"><path d="M0.4 1.5H8.2M0.4 3.5H5.4M0.4 5.5H8.2M0.4 7.5H5.4" stroke="#8c8c8c" stroke-width="1" fill="none"/></svg>
<svg style="left:263.6px;top:51px" width="9" height="9" viewBox="0 0 9 9"><path d="M0.4 1.5H8.2M1.8 3.5H6.8M0.4 5.5H8.2M1.8 7.5H6.8" stroke="#8c8c8c" stroke-width="1" fill="none"/></svg>
<svg style="left:275.3px;top:51px" width="9" height="9" viewBox="0 0 9 9"><path d="M0.4 1.5H8.2M3.2 3.5H8.2M0.4 5.5H8.2M3.2 7.5H8.2" stroke="#8c8c8c" stroke-width="1" fill="none"/></svg>
<svg style="left:287px;top:51px" width="9" height="9" viewBox="0 0 9 9"><path d="M0.4 1.5H8.2M0.4 3.5H8.2M0.4 5.5H8.2M0.4 7.5H8.2" stroke="#8c8c8c" stroke-width="1" fill="none"/></svg>
<svg style="left:303.6px;top:50px" width="10" height="10" viewBox="0 0 10 10"><path d="M4 2.5H9M4 4.5H9M4 6.5H9M4 8.5H9" stroke="#8c8c8c" stroke-width="1" fill="none"/><path d="M1.6 0.6V9.2M0.2 2.2L1.6 0.5L3 2.2M0.2 7.6L1.6 9.3L3 7.6" stroke="#3b78c9" stroke-width="0.9" fill="none"/></svg>
<svg style="left:313.70px;top:54.65px" width="3.4" height="1.9" viewBox="0 0 3.4 1.9"><path d="M0 0H3.4L1.7 1.9Z" fill="#666"/></svg>
<svg style="left:325.6px;top:50px" width="10" height="10" viewBox="0 0 10 10"><path d="M2.6 3.4L5 1L8 4.4L5 7.4Z" fill="#fff" stroke="#555" stroke-width="0.7"/><path d="M4.2 3V1.2C4.2 0 6 0 6 1.2V2.2" fill="none" stroke="#555" stroke-width="0.6"/><path d="M8.4 4.6C9.4 6 9.2 7 8.4 7C7.6 7 7.6 6 8.4 4.6Z" fill="#3b78c9"/><rect x="0.4" y="8" width="9" height="1.6" fill="#e4e4e4" stroke="#c8c8c8" stroke-width="0.3"/></svg>
<svg style="left:337.10px;top:54.65px" width="3.4" height="1.9" viewBox="0 0 3.4 1.9"><path d="M0 0H3.4L1.7 1.9Z" fill="#666"/></svg>
<svg style="left:344px;top:51px" width="8" height="9" viewBox="0 0 8 9"><rect x="0.5" y="0.6" width="7" height="7" fill="none" stroke="#b0b0b0" stroke-width="0.7"/><path d="M4 0.6V7.6M0.5 4.1H7.5" stroke="#b0b0b0" stroke-width="0.6"/></svg>
<svg style="left:355.40px;top:54.65px" width="3.4" height="1.9" viewBox="0 0 3.4 1.9"><path d="M0 0H3.4L1.7 1.9Z" fill="#666"/></svg>
<div style="left:231.6px;top:33px;width:0.8px;height:11px;background:#dcdcdc;"></div>
<div style="left:370px;top:30px;width:548px;height:32px;background:#fff;border:1px solid #cdcdcd;box-sizing:border-box;"></div>
<div style="left:371px;top:31px;width:38.4px;height:30px;background:#fff;border:2px solid #c2d7f3;box-sizing:border-box;"></div>
<div style="left:909px;top:30px;width:1px;height:32px;background:#cdcdcd;"></div>
<div style="left:909px;top:41px;width:9px;height:1px;background:#d4d4d4;"></div>
<div style="left:909px;top:51px;width:9px;height:1px;background:#d4d4d4;"></div>
<svg style="left:912px;top:35px" width="3.4" height="2" viewBox="0 0 3.4 2"><path d="M0 2H3.4L1.7 0Z" fill="#b9b9b9"/></svg>
<svg style="left:911.90px;top:45.40px" width="3.4" height="2" viewBox="0 0 3.4 2"><path d="M0 0H3.4L1.7 2Z" fill="#555"/></svg>
<svg style="left:911.90px;top:56.40px" width="3.4" height="2" viewBox="0 0 3.4 2"><path d="M0 0H3.4L1.7 2Z" fill="#555"/></svg>
<div style="left:911.8px;top:55px;width:3.6px;height:0.7px;background:#555;"></div>
<span style="left:375.00px;top:36.00px;font-size:6.8px;color:#222;transform:scaleX(0.9748);">АаБбВвГг,</span>
<span style="left:373.50px;top:48.90px;font-size:6.8px;color:#555;transform:scaleX(0.9552);">¶ Обычный</span>
<span style="left:413.10px;top:36.00px;font-size:6.8px;color:#222;transform:scaleX(0.9873);">АаБбВвГг,</span>
<span style="left:411.90px;top:48.90px;font-size:6.8px;color:#555;transform:scaleX(0.8818);">¶ Без инте...</span>
<span style="left:451.50px;top:35.60px;font-size:10px;color:#2e74b5;transform:scaleX(0.9556);overflow:hidden;width:32.54px;">АаБбВв</span>
<span style="left:450.60px;top:48.90px;font-size:6.8px;color:#555;transform:scaleX(0.9378);">Заголово...</span>
<span style="left:490.00px;top:35.20px;font-size:8.4px;color:#2e74b5;transform:scaleX(0.9232);overflow:hidden;width:33.80px;">АаБбВвГ</span>
<span style="left:489.00px;top:48.90px;font-size:6.8px;color:#555;transform:scaleX(0.9320);">Заголово...</span>
<span style="left:528.50px;top:30.20px;font-size:15.4px;color:#222;transform:scaleX(1.0152);line-height:18px;height:18px;overflow:hidden;width:30.44px;">АаБб</span>
<span style="left:530.30px;top:48.90px;font-size:6.8px;color:#555;transform:scaleX(0.8955);">Название</span>
<span style="left:567.00px;top:36.00px;font-size:6.6px;color:#6a6a6a;transform:scaleX(1.1148);">АаБбВвГ</span>
<span style="left:566.30px;top:48.90px;font-size:6.8px;color:#555;transform:scaleX(0.9147);">Подзагол...</span>
<span style="left:605.10px;top:36.00px;font-size:6.8px;color:#666;font-style:italic;transform:scaleX(0.9936);">АаБбВвГг</span>
<span style="left:605.10px;top:48.90px;font-size:6.8px;color:#555;transform:scaleX(0.8758);">Слабое в...</span>
<span style="left:643.50px;top:36.00px;font-size:6.8px;color:#222;font-style:italic;transform:scaleX(0.9873);">АаБбВвГг</span>
<span style="left:642.90px;top:48.90px;font-size:6.8px;color:#555;transform:scaleX(0.8941);">Выделение</span>
<span style="left:682.00px;top:36.00px;font-size:6.8px;color:#4a90d9;font-style:italic;transform:scaleX(0.9778);">АаБбВвГг</span>
<span style="left:682.30px;top:48.90px;font-size:6.8px;color:#555;transform:scaleX(0.9035);">Сильное...</span>
<span style="left:720.50px;top:36.00px;font-size:6.8px;color:#111;font-weight:bold;transform:scaleX(0.9020);">АаБбВвГг,</span>
<span style="left:723.90px;top:48.90px;font-size:6.8px;color:#555;transform:scaleX(0.9510);">Строгий</span>
<span style="left:758.90px;top:36.00px;font-size:6.8px;color:#666;font-style:italic;transform:scaleX(0.9778);">АаБбВвГг</span>
<span style="left:761.80px;top:48.90px;font-size:6.8px;color:#555;transform:scaleX(0.8862);">Цитата 2</span>
<span style="left:797.10px;top:36.00px;font-size:6.8px;color:#4a90d9;font-style:italic;transform:scaleX(0.9841);">АаБбВвГг</span>
<span style="left:795.80px;top:48.90px;font-size:6.8px;color:#555;transform:scaleX(0.9007);">Выделенн...</span>
<div style="left:797px;top:36.2px;width:31.4px;height:0.7px;background:#6aa3df;"></div>
<div style="left:797px;top:46.2px;width:31.4px;height:0.7px;background:#6aa3df;"></div>
<span style="left:835.30px;top:36.00px;font-size:6.6px;color:#666;transform:scaleX(0.9902);">ААБбВвГг,</span>
<span style="left:834.30px;top:48.90px;font-size:6.8px;color:#555;transform:scaleX(0.8821);">Слабая сс...</span>
<span style="left:874.00px;top:36.00px;font-size:6.6px;color:#3b82d6;font-weight:bold;transform:scaleX(0.8914);">ААБбВвГг,</span>
<span style="left:874.90px;top:48.90px;font-size:6.8px;color:#555;transform:scaleX(0.8793);">Сильная...</span>
<span style="left:936.10px;top:28.50px;font-size:7px;color:#383838;transform:scaleX(0.8607);">Найти</span>
<svg style="left:958.70px;top:33.85px" width="3.4" height="1.9" viewBox="0 0 3.4 1.9"><path d="M0 0H3.4L1.7 1.9Z" fill="#666"/></svg>
<span style="left:936.10px;top:40.90px;font-size:7px;color:#383838;transform:scaleX(0.8675);">Заменить</span>
<span style="left:936.10px;top:53.00px;font-size:7px;color:#383838;transform:scaleX(0.8453);">Выделить</span>
<svg style="left:965.20px;top:58.45px" width="3.4" height="1.9" viewBox="0 0 3.4 1.9"><path d="M0 0H3.4L1.7 1.9Z" fill="#666"/></svg>
<svg style="left:924.8px;top:30px" width="10" height="9" viewBox="0 0 10 9"><path d="M1.8 1.2H3.8V3H5.6V1.2H7.6V3.4L9 6.4V8.4H5.6V5.6H3.8V8.4H0.4V6.4L1.8 3.4Z" fill="#5a5a5a"/></svg>
<svg style="left:924.8px;top:42px" width="10" height="10" viewBox="0 0 10 10"><text x="0.2" y="4.2" font-size="4.6" font-family="Liberation Sans, sans-serif" fill="#555">ab</text><text x="4.4" y="9.2" font-size="4.6" font-family="Liberation Sans, sans-serif" fill="#3b78c9">ac</text><path d="M1.2 5.4V7.6H3.6M2.6 6.6L3.8 7.6L2.6 8.6" stroke="#3b78c9" stroke-width="0.7" fill="none"/></svg>
<svg style="left:926.6px;top:54.4px" width="7" height="10" viewBox="0 0 7 10"><path d="M0.8 0.6V7.6L2.6 6L4 9L5 8.6L3.8 5.6H6Z" fill="#fff" stroke="#666" stroke-width="0.7"/></svg>
<svg style="left:1013.4px;top:69.2px" width="6" height="4" viewBox="0 0 6 4"><path d="M0.5 3.4L3 0.8L5.5 3.4" stroke="#555" stroke-width="0.9" fill="none"/></svg>
<span style="left:951.80px;top:0.30px;font-size:7.6px;color:#333;font-weight:bold;transform:scaleX(0.9051);-webkit-text-stroke:0.2px #333;">?</span>
<svg style="left:965.8px;top:3.4px" width="8" height="6" viewBox="0 0 8 6"><rect x="0.4" y="0.4" width="6.8" height="4.9" fill="none" stroke="#666" stroke-width="0.8"/><path d="M3.8 1.6V4.2M2.6 2.6L3.8 1.4L5 2.6" stroke="#666" stroke-width="0.7" fill="none"/></svg>
<div style="left:982px;top:6.4px;width:5.4px;height:0.9px;background:#666;"></div>
<svg style="left:997.4px;top:2.8px" width="7" height="7" viewBox="0 0 7 7"><rect x="0.4" y="2" width="4" height="3.8" fill="none" stroke="#555" stroke-width="0.8"/><path d="M1.8 2V0.5H6V4.4H4.4" fill="none" stroke="#555" stroke-width="0.8"/></svg>
<svg style="left:1013.2px;top:3.4px" width="6" height="6" viewBox="0 0 6 6"><path d="M0.5 0.5L5 5M5 0.5L0.5 5" stroke="#333" stroke-width="1"/></svg>
<div style="left:1011.2px;top:13.2px;width:12.8px;height:13px;background:#b1b1b1;"></div>
<svg style="left:1011.2px;top:13.2px" width="13" height="13" viewBox="0 0 13 13"><circle cx="6.5" cy="4.6" r="2.8" fill="#fff"/><path d="M1.6 13C1.6 9 3.4 8 6.5 8C9.6 8 11.4 9 11.4 13Z" fill="#fff"/></svg>
<svg style="left:5.2px;top:1.8px" width="9" height="9" viewBox="0 0 9 9"><rect x="3.4" y="0.8" width="5" height="7.2" fill="#fff" stroke="#2b579a" stroke-width="0.7"/><path d="M0.2 1L5 0.2V8.6L0.2 7.8Z" fill="#2b579a"/><text x="0.7" y="6.2" font-size="4.6" font-weight="bold" font-family="Liberation Sans, sans-serif" fill="#fff">W</text></svg>
<svg style="left:20.8px;top:2.2px" width="8" height="8" viewBox="0 0 8 8"><path d="M0.4 0.4H7.4V7.4H0.4Z" fill="#fff" stroke="#8a45a8" stroke-width="0.9"/><path d="M1.8 0.4V3H6V0.4" fill="none" stroke="#8a45a8" stroke-width="0.6"/><rect x="1.8" y="4.8" width="4.2" height="2.6" fill="#8a45a8"/><rect x="2.6" y="5.8" width="1.1" height="1.6" fill="#fff"/></svg>
<svg style="left:36.6px;top:2.2px" width="9" height="8" viewBox="0 0 9 8"><path d="M1 3.2H5.4C7.6 3.2 7.6 6.8 5.4 6.8H3.6" fill="none" stroke="#3b78c9" stroke-width="1.1"/><path d="M0.2 3.2L3 0.8V5.6Z" fill="#3b78c9"/></svg>
<svg style="left:47.30px;top:5.00px" width="2.6" height="1.6" viewBox="0 0 2.6 1.6"><path d="M0 0H2.6L1.3 1.6Z" fill="#666"/></svg>
<svg style="left:57.6px;top:2.2px" width="9" height="8" viewBox="0 0 9 8"><path d="M8 3.2H3.8C1.6 3.2 1.6 6.8 3.8 6.8" fill="none" stroke="#3b78c9" stroke-width="1.1"/><path d="M8.8 3.2L6 0.8V5.6Z" fill="#3b78c9"/></svg>
<svg style="left:72.6px;top:4px" width="4" height="4" viewBox="0 0 4 4"><path d="M0.4 0.6H3.4" stroke="#8a8a8a" stroke-width="0.7"/><path d="M0.2 1.8H3.6L1.9 3.6Z" fill="#8a8a8a"/></svg>
<span style="left:3.80px;top:542.60px;font-size:6.2px;color:#fff;transform:scaleX(0.9063);">СТРАНИЦА 1 ИЗ 1</span>
<span style="left:62.50px;top:542.60px;font-size:6.2px;color:#fff;transform:scaleX(0.9407);">ЧИСЛО СЛОВ: 119</span>
<svg style="left:124.2px;top:545.4px" width="8" height="6.4" viewBox="0 0 8 6.4"><path d="M0.4 0.6H3.2V5.4H0.4ZM3.2 0.6H6V5.4H3.2" fill="none" stroke="#fff" stroke-width="0.7"/><path d="M5 2.4L6.4 3.8L7.6 1.8" stroke="#fff" stroke-width="0.7" fill="none"/></svg>
<span style="left:140.80px;top:542.60px;font-size:6.2px;color:#fff;transform:scaleX(0.8685);">РУССКИЙ</span>
<svg style="left:8px;top:561px" width="9" height="9" viewBox="0 0 9 9"><path d="M0 1.3L3.9 0.7V4.2H0ZM4.5 0.6L9 0V4.2H4.5ZM0 4.8H3.9V8.3L0 7.7ZM4.5 4.8H9V9L4.5 8.4Z" fill="#fff"/></svg>
<svg style="left:32.4px;top:560.8px" width="9" height="9" viewBox="0 0 9 9"><circle cx="5.6" cy="3.4" r="2.7" fill="none" stroke="#444" stroke-width="0.8"/><path d="M3.6 5.4L0.4 8.6" stroke="#444" stroke-width="0.9"/></svg>
<span style="left:47.50px;top:559.80px;font-size:8px;color:#333;transform:scaleX(0.9670);">Введите здесь текст для поиска</span>
<div style="left:25.6px;top:575.2px;width:183.2px;height:0.8px;background:#c9c9c9;"></div>
<svg style="left:216.6px;top:560.4px" width="10.4" height="9" viewBox="0 0 10.4 9"><path d="M0.4 1H7.4M0.4 8H7.4" stroke="#e8ecee" stroke-width="0.9"/><path d="M2 1V8M6.6 1V8" stroke="#e8ecee" stroke-width="0.9"/><path d="M9 1.4V3M9 3.8V5.2M9 6V7.6" stroke="#e8ecee" stroke-width="0.9"/><path d="M0.6 2.4V6.6" stroke="#b9c3c8" stroke-width="0.6"/></svg>
<svg style="left:242.6px;top:558.6px" width="13.4" height="13.4" viewBox="0 0 13.4 13.4"><defs><linearGradient id="eg" x1="0.1" y1="0.9" x2="0.8" y2="0.1"><stop offset="0" stop-color="#0b4f9c"/><stop offset="0.55" stop-color="#1f8fe0"/><stop offset="0.8" stop-color="#37c6c8"/><stop offset="1" stop-color="#6ddc5a"/></linearGradient></defs><circle cx="6.7" cy="6.7" r="6.4" fill="url(#eg)"/><path d="M4.2 8.2C4.2 5.8 6.4 4.6 8.4 5.2C10.6 5.8 11 7.8 10.2 8.8H6.8C7 10.4 9 11.2 11.6 10.2C10.2 12.4 7.2 13 5.4 11.8C4.4 11 4.2 9.6 4.2 8.2Z" fill="#0a3f86"/><path d="M6.8 8.8H10.2C10.8 8 10.6 6.8 9.6 6C10.2 7.4 8.6 8.4 6.8 8.8Z" fill="#213642" opacity="0.75"/></svg>
<svg style="left:269px;top:559.6px" width="12.4" height="11" viewBox="0 0 12.4 11"><path d="M0.4 0.8H4.6L5.6 2H12V10.4H0.4Z" fill="#e9a82d"/><rect x="0.4" y="2.8" width="11.6" height="7.6" fill="#fcd765"/><rect x="2.8" y="6" width="6.8" height="4.4" fill="#3b8de0"/><rect x="4.2" y="7.8" width="4" height="2.6" fill="#fcd765"/></svg>
<svg style="left:295px;top:559.4px" width="13" height="14" viewBox="0 0 13 14"><path d="M4 3.6V2.4C4 0.2 9 0.2 9 2.4V3.6" fill="none" stroke="#f2f2f2" stroke-width="0.9"/><rect x="0.6" y="3.6" width="11.8" height="9.6" fill="#f5f5f5"/><rect x="3.8" y="5.8" width="2.3" height="2.3" fill="#f25022"/><rect x="6.7" y="5.8" width="2.3" height="2.3" fill="#7fba00"/><rect x="3.8" y="8.7" width="2.3" height="2.3" fill="#00a4ef"/><rect x="6.7" y="8.7" width="2.3" height="2.3" fill="#ffb900"/></svg>
<svg style="left:320.8px;top:558.4px" width="13.6" height="13" viewBox="0 0 13.6 13"><path d="M0.4 5.4L7 0.6L13.6 5.4V12.4H0.4Z" fill="#1b8ddb"/><path d="M0.4 5.6L7 10L13.6 5.6V12.4H0.4Z" fill="#4fb4f2"/><path d="M1.6 6.2L7 9.6L12.4 6.2V4.8H1.6Z" fill="#eaf6ff"/><path d="M0.4 12.4L7 8.2L13.6 12.4Z" fill="#2c9be6"/></svg>
<svg style="left:347.2px;top:559px" width="13" height="12.4" viewBox="0 0 13 12.4"><path d="M1.6 0.4H9L12.6 6.2L9 12H1.6C0.8 12 0.4 11.6 0.4 10.8V1.6C0.4 0.8 0.8 0.4 1.6 0.4Z" fill="#f6f6f6"/><text x="1.2" y="10.6" font-size="11.6" font-weight="bold" font-family="Liberation Sans, sans-serif" fill="#e3262b" transform="scale(0.86,1)">Я</text></svg>
<svg style="left:373.6px;top:558.8px" width="12.6" height="12.4" viewBox="0 0 12.6 12.4"><ellipse cx="6.2" cy="6.1" rx="5.9" ry="5.9" fill="#ee1c24"/><ellipse cx="6.2" cy="6.1" rx="2.5" ry="4.3" fill="#213642"/><path d="M6.2 0.2A5.9 5.9 0 0 1 6.2 12A7 7 0 0 0 6.2 0.2Z" fill="#b80d14" opacity="0.5"/></svg>
<div style="left:393.3px;top:555px;width:25.4px;height:21px;background:#4e6068;"></div>
<div style="left:393.3px;top:574.4px;width:25.4px;height:1.6px;background:#8fc4f0;"></div>
<svg style="left:399.2px;top:559.8px" width="14" height="13" viewBox="0 0 14 13"><rect x="5.4" y="1.4" width="7.6" height="10" fill="#fff" stroke="#2b579a" stroke-width="0.8"/><path d="M7.6 4H11.6M7.6 6.2H11.6M7.6 8.4H11.6" stroke="#2b579a" stroke-width="0.7"/><path d="M0.4 1.6L7.6 0.4V12.4L0.4 11.2Z" fill="#2b579a"/><text x="1.2" y="9" font-size="6.6" font-weight="bold" font-family="Liberation Sans, sans-serif" fill="#fff">W</text></svg>
<svg style="left:425.6px;top:559.6px" width="13" height="13" viewBox="0 0 13 13"><circle cx="6.5" cy="6.5" r="6.2" fill="#dd4b3e"/><path d="M6.5 6.5L1.2 3.4A6.2 6.2 0 0 0 5.6 12.6Z" fill="#1ea362"/><path d="M6.5 6.5L5.6 12.6A6.2 6.2 0 0 0 12.3 4.2L6.5 4.2Z" fill="#ffcd46"/><path d="M6.5 6.5L12.3 4.2A6.2 6.2 0 0 0 1.2 3.4L4 6.5Z" fill="#dd4b3e"/><circle cx="6.5" cy="6.5" r="2.9" fill="#fff"/><circle cx="6.5" cy="6.5" r="2.2" fill="#4c8bf5"/></svg>
<div style="left:421.4px;top:574.4px;width:20.8px;height:1.6px;background:#8fc4f0;"></div>
<svg style="left:873px;top:545.2px" width="8" height="7" viewBox="0 0 8 7"><rect x="0.4" y="0.4" width="6.6" height="5.6" fill="none" stroke="#fff" stroke-width="0.7"/></svg>
<div style="left:890px;top:543px;width:19px;height:12px;background:#446fb3;"></div>
<svg style="left:894px;top:545.2px" width="8" height="7" viewBox="0 0 8 7"><rect x="0.4" y="0.4" width="6.6" height="5.6" fill="#fff"/><path d="M1.4 2H6M1.4 3.4H6M1.4 4.8H6" stroke="#2b579a" stroke-width="0.6"/></svg>
<svg style="left:914px;top:545.2px" width="8" height="7" viewBox="0 0 8 7"><rect x="0.4" y="0.4" width="6.6" height="5.6" fill="none" stroke="#fff" stroke-width="0.7"/></svg>
<div style="left:932px;top:548.4px;width:70px;height:0.7px;background:#d5deec;"></div>
<div style="left:963px;top:545.6px;width:1.2px;height:6px;background:#fff;"></div>
<div style="left:995px;top:545.6px;width:0.8px;height:6px;background:#fff;"></div>
<span style="left:1006.00px;top:542.60px;font-size:6.2px;color:#fff;transform:scaleX(1.0109);">100%</span>
<svg style="left:889px;top:560px" width="12" height="12" viewBox="0 0 12 12"><circle cx="6" cy="6" r="5.9" fill="#f2f8ff"/><circle cx="6" cy="6" r="4.9" fill="#1e96e8"/><text x="3.4" y="9.4" font-size="9.4" font-weight="bold" font-family="Liberation Sans, sans-serif" fill="#fff">?</text></svg>
<svg style="left:906.2px;top:563.6px" width="7" height="5" viewBox="0 0 7 5"><path d="M0.6 4.2L3.4 1.2L6.2 4.2" stroke="#fff" stroke-width="0.9" fill="none"/></svg>
<svg style="left:918.4px;top:561.4px" width="9" height="9" viewBox="0 0 9 9"><path d="M0.6 8.4A7.8 7.8 0 0 1 8.4 0.6M2.6 8.4A5.8 5.8 0 0 1 8.4 2.6M4.6 8.4A3.8 3.8 0 0 1 8.4 4.6" stroke="#c8d0d6" stroke-width="0.8" fill="none"/><circle cx="7.6" cy="7.6" r="0.9" fill="#fff"/></svg>
<svg style="left:930.6px;top:561.6px" width="10" height="9" viewBox="0 0 10 9"><path d="M0.4 3H2.2L4.4 1V8L2.2 6H0.4Z" fill="none" stroke="#fff" stroke-width="0.8"/><path d="M5.8 2.8C6.8 3.8 6.8 5.2 5.8 6.2M7.2 1.6C9 3.4 9 5.6 7.2 7.4" stroke="#fff" stroke-width="0.7" fill="none"/></svg>
<span style="left:945.00px;top:560.00px;font-size:6.4px;color:#fff;transform:scaleX(0.8370);">ENG</span>
<span style="left:971.90px;top:554.60px;font-size:6.4px;color:#fff;transform:scaleX(0.9235);">8:50</span>
<span style="left:964.00px;top:563.60px;font-size:6.4px;color:#fff;transform:scaleX(0.8938);">12.10.2020</span>
<svg style="left:1002px;top:560.4px" width="13" height="12" viewBox="0 0 13 12"><path d="M0.6 0.6H9.4V7.4H4.4L2.4 9.4V7.4H0.6Z" fill="#fff"/><path d="M2 2.4H8M2 4H8M2 5.6H6" stroke="#213642" stroke-width="0.6"/><circle cx="8.8" cy="8.2" r="3.3" fill="#14171b" stroke="#7d848c" stroke-width="0.5"/><text x="7.7" y="10.2" font-size="5.4" font-family="Liberation Sans, sans-serif" fill="#fff">1</text></svg>
<div style="left:1020.6px;top:555px;width:0.7px;height:21px;background:#6b7780;"></div>
<div style="left:763px;top:422px;width:255px;height:127.2px;background:#ffffff;box-shadow:0 0 3px rgba(0,0,0,0.25);"></div>
<div style="left:763px;top:422px;width:255px;height:25px;background:#696969;"></div>
<svg style="left:769.4px;top:428.4px" width="11.4" height="12.4" viewBox="0 0 11.4 12.4"><path d="M5.7 0.5L10.8 2.2C10.8 7 9 10.2 5.7 11.9C2.4 10.2 0.6 7 0.6 2.2Z" fill="none" stroke="#f4f4f4" stroke-width="1.1"/><path d="M6.6 2.8L3.8 6.6H5.6L4.8 9.4L7.6 5.6H5.8Z" fill="#f2f2f2"/></svg>
<span style="left:784.00px;top:429.80px;font-size:8.2px;color:#d4d4d4;transform:scaleX(1.0738);">Byte</span>
<span style="left:801.60px;top:429.80px;font-size:8.2px;color:#ffffff;font-weight:bold;transform:scaleX(1.0815);">Fence</span>
<span style="left:771.60px;top:456.60px;font-size:13px;color:#222;font-weight:bold;transform:scaleX(0.9370);line-height:16px;height:16px;">Остерегайтесь</span>
<span style="left:864.70px;top:456.60px;font-size:13px;color:#ee1111;font-weight:bold;transform:scaleX(0.9670);line-height:16px;height:16px;">вредоносных руткитов</span>
<span style="left:771.60px;top:477.40px;font-size:8.1px;color:#4a4a4a;transform:scaleX(0.9845);-webkit-text-stroke:0.12px #4a4a4a;">Руткит – это набор вредоносных программ, который прячется в</span>
<span style="left:771.60px;top:489.50px;font-size:8.1px;color:#4a4a4a;transform:scaleX(0.9760);-webkit-text-stroke:0.12px #4a4a4a;">вашем компьютере, чтобы предоставить удаленный доступ</span>
<span style="left:771.60px;top:501.60px;font-size:8.1px;color:#4a4a4a;transform:scaleX(0.9575);-webkit-text-stroke:0.12px #4a4a4a;">хакерам.</span>
<span style="left:771.60px;top:530.00px;font-size:7px;color:#444;transform:scaleX(0.9393);">Отмена</span>
<div style="left:838.7px;top:516px;width:171.2px;height:24.5px;background:#696969;"></div>
<span style="left:861.50px;top:522.60px;font-size:9px;color:#fff;font-weight:bold;transform:scaleX(1.0574);text-decoration:underline;">Защитите свой компьютер</span>
</div></body></html>
